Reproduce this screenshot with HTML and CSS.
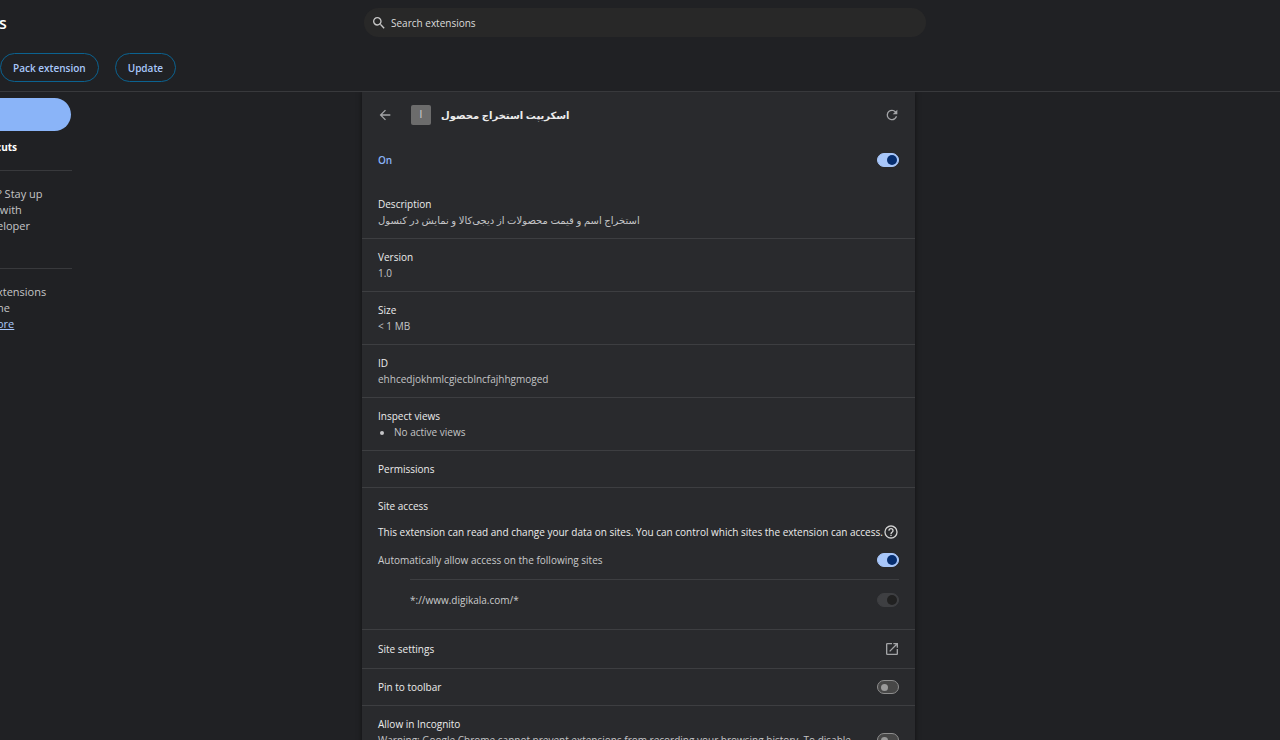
FILE: index.html
```html
<!DOCTYPE html>
<html lang="en">
<head>
    <meta charset="UTF-8">
    <meta name="viewport" content="width=device-width, initial-scale=1.0">
    <title>Extensions</title>
    <link rel="stylesheet" href="styles.css">
</head>
<body>
    <header>
        <div class="top-bar">
            <h1>s</h1>
            <label class="search">
                <svg width="16" height="16" viewBox="0 0 24 24" fill="currentColor"><path d="M15.5 14h-.79l-.28-.27A6.47 6.47 0 0 0 16 9.5 6.5 6.5 0 1 0 9.5 16c1.61 0 3.09-.59 4.23-1.57l.27.28v.79l5 4.99L20.49 19l-4.99-5zm-6 0C7.01 14 5 11.99 5 9.5S7.01 5 9.5 5 14 7.01 14 9.5 11.99 14 9.5 14z"/></svg>
                <input type="search" placeholder="Search extensions" aria-label="Search extensions">
            </label>
        </div>
        <div class="dev-buttons">
            <button>Pack extension</button>
            <button>Update</button>
        </div>
    </header>

    <div class="content">
        <nav class="sidebar">
            <a class="selected" href="#" aria-label="Extensions"></a>
            <a class="shortcuts" href="#">cuts</a>
            <p>? Stay up<br>&nbsp;with<br>eloper</p>
            <p>xtensions<br>he<br><a href="#">ore</a></p>
        </nav>

        <main class="card">
            <div class="card-header">
                <button class="icon-button" aria-label="Back">
                    <svg width="16" height="16" viewBox="0 0 24 24" fill="currentColor"><path d="M20 11H7.83l5.59-5.59L12 4l-8 8 8 8 1.41-1.41L7.83 13H20v-2z"/></svg>
                </button>
                <span class="ext-icon">ا</span>
                <h2 dir="rtl" lang="fa">اسکریپت استخراج محصول</h2>
                <button class="icon-button" aria-label="Reload">
                    <svg width="16" height="16" viewBox="0 0 24 24" fill="currentColor"><path d="M17.65 6.35A7.96 7.96 0 0 0 12 4a8 8 0 1 0 7.73 10h-2.08A6 6 0 1 1 12 6c1.66 0 3.14.69 4.22 1.78L13 11h7V4l-2.35 2.35z"/></svg>
                </button>
            </div>
            <div class="on-row">
                <label for="enable">On</label>
                <input class="toggle" type="checkbox" id="enable" checked>
            </div>

            <section>
                <h3>Description</h3>
                <p><bdi lang="fa">استخراج اسم و قیمت محصولات از دیجی‌کالا و نمایش در کنسول</bdi></p>
            </section>
            <section>
                <h3>Version</h3>
                <p>1.0</p>
            </section>
            <section>
                <h3>Size</h3>
                <p>&lt; 1 MB</p>
            </section>
            <section>
                <h3>ID</h3>
                <p>ehhcedjokhmlcgiecblncfajhhgmoged</p>
            </section>
            <section>
                <h3>Inspect views</h3>
                <ul>
                    <li>No active views</li>
                </ul>
            </section>
            <section>
                <h3>Permissions</h3>
            </section>
            <section>
                <h3>Site access</h3>
                <div class="access-info">
                    <span>This extension can read and change your data on sites. You can control which sites the extension can access.</span>
                    <a href="#" aria-label="Help">
                        <svg width="16" height="16" viewBox="0 0 24 24" fill="currentColor"><path d="M11 18h2v-2h-2v2zm1-16a10 10 0 1 0 0 20 10 10 0 0 0 0-20zm0 18c-4.41 0-8-3.59-8-8s3.59-8 8-8 8 3.59 8 8-3.59 8-8 8zm0-14a4 4 0 0 0-4 4h2c0-1.1.9-2 2-2s2 .9 2 2c0 2-3 1.75-3 5h2c0-2.25 3-2.5 3-5a4 4 0 0 0-4-4z"/></svg>
                    </a>
                </div>
                <div class="access-row">
                    <label for="all-sites">Automatically allow access on the following sites</label>
                    <input class="toggle" type="checkbox" id="all-sites" checked>
                </div>
                <div class="site-row">
                    <label for="site">*://www.digikala.com/*</label>
                    <input class="toggle" type="checkbox" id="site" checked disabled>
                </div>
            </section>
            <section class="row settings">
                <h3>Site settings</h3>
                <button class="icon-button" aria-label="Site settings">
                    <svg width="16" height="16" viewBox="0 0 24 24" fill="currentColor"><path d="M19 19H5V5h7V3H5a2 2 0 0 0-2 2v14a2 2 0 0 0 2 2h14c1.1 0 2-.9 2-2v-7h-2v7zM14 3v2h3.59l-9.83 9.83 1.41 1.41L19 6.41V10h2V3h-7z"/></svg>
                </button>
            </section>
            <section class="row">
                <h3><label for="pin">Pin to toolbar</label></h3>
                <input class="toggle" type="checkbox" id="pin">
            </section>
            <section class="row incognito">
                <div>
                    <h3><label for="incognito">Allow in Incognito</label></h3>
                    <p>Warning: Google Chrome cannot prevent extensions from recording your browsing history. To disable</p>
                </div>
                <input class="toggle" type="checkbox" id="incognito">
            </section>
        </main>
    </div>
</body>
</html>
```
FILE: styles.css
```css
* {
    box-sizing: border-box;
}
body {
    margin: 0;
    height: 100vh;
    overflow: hidden;
    background-color: #202124;
    color: #ececec;
    font-family: "Open Sans", "DejaVu Sans", sans-serif;
    font-size: 10px;
    line-height: 16px;
}
h1, h2, h3, p, ul {
    margin: 0;
    font-size: 10px;
}
svg {
    display: block;
}
button, input {
    font: inherit;
    margin: 0;
}
header {
    height: 92px;
    border-bottom: 1px solid #38393c;
}
.top-bar {
    display: grid;
    grid-template-columns: 1fr 562px 1fr;
    align-items: center;
    padding: 8px 0 0 10px;
}
.top-bar h1 {
    margin-left: -11px;
    font-size: 16px;
    font-weight: 600;
    color: #fff;
}
.search {
    grid-column: 2;
    display: flex;
    align-items: center;
    gap: 4px;
    height: 29px;
    padding: 0 7px;
    border-radius: 15px;
    background-color: #282828;
    color: #c7c7c7;
}
.search input {
    flex: 1;
    padding: 0;
    border: none;
    outline: none;
    background: none;
    color: #e3e3e3;
}
.search input::placeholder {
    color: #dcdcdc;
}
.dev-buttons {
    display: flex;
    gap: 16px;
    margin-top: 16px;
}
.dev-buttons button {
    height: 29px;
    padding: 0 12px;
    border: 1px solid #0b6290;
    border-radius: 15px;
    background: none;
    color: #a8c7fa;
    font-weight: 600;
}
.content {
    display: grid;
    grid-template-columns: 1fr 553px 1fr;
    padding-right: 3px;
}
.sidebar {
    width: 72px;
    padding-top: 6px;
    color: #c4c5c7;
}
.selected {
    display: block;
    height: 33px;
    margin-right: 1px;
    border-radius: 0 17px 17px 0;
    background-color: #8ab4f8;
}
.shortcuts {
    display: block;
    padding: 8px 0 15px;
    margin-left: -4px;
    color: #fff;
    font-weight: 700;
    text-decoration: none;
}
.sidebar p {
    height: 98px;
    margin-left: -3px;
    padding-top: 15px;
    border-top: 1px solid #38393c;
    font-size: 11px;
    white-space: nowrap;
}
.sidebar p a {
    color: #a8c7fa;
}
.card {
    background-color: #292a2d;
    box-shadow: 0 0 5px rgba(0, 0, 0, 0.5);
    clip-path: inset(0 -8px);
}
.card-header {
    display: flex;
    align-items: center;
    height: 46px;
    padding: 0 15px;
}
.icon-button {
    padding: 0;
    border: none;
    background: none;
    color: #a3a4a7;
}
.ext-icon {
    width: 20px;
    height: 20px;
    margin: 0 10px 0 18px;
    border-radius: 2px;
    background-color: #6c6c6c;
    color: #d0d0d0;
    line-height: 18px;
    text-align: center;
}
.card-header h2 {
    margin-right: auto;
    font-weight: 700;
}
.on-row {
    display: flex;
    align-items: center;
    justify-content: space-between;
    height: 44px;
    margin-bottom: 4px;
    padding: 0 16px;
    color: #8ab4f8;
    font-weight: 600;
}
section {
    padding: 10px 16px;
    border-bottom: 1px solid #3d3e41;
}
h3 {
    font-weight: 500;
}
section p, section ul {
    color: #c4c5c7;
}
section ul {
    padding-left: 16px;
}
.toggle {
    appearance: none;
    display: flex;
    flex-shrink: 0;
    align-items: center;
    width: 22px;
    height: 14px;
    padding: 0 3px;
    border: 1px solid #8e8e8e;
    border-radius: 7px;
    background-color: #474747;
}
.toggle::before {
    content: "";
    width: 7px;
    height: 7px;
    border-radius: 50%;
    background-color: #9a9a9a;
}
.toggle:checked {
    justify-content: flex-end;
    padding: 0 1px;
    border-color: #a8c7fa;
    background-color: #a8c7fa;
}
.toggle:checked::before {
    width: 10px;
    height: 10px;
    background-color: #062e6f;
}
.toggle:disabled {
    border-color: #3e3f42;
    background-color: #3e3f42;
}
.toggle:disabled::before {
    background-color: #212121;
}
.access-info {
    display: flex;
    align-items: center;
    margin-top: 10px;
    white-space: nowrap;
}
.access-info a {
    color: #d5d5d5;
}
.access-row, .site-row {
    display: flex;
    align-items: center;
    justify-content: space-between;
    color: #c9cacc;
}
.access-row {
    height: 38px;
    margin-top: 1px;
}
.site-row {
    height: 40px;
    margin-left: 32px;
    border-top: 1px solid #3d3e41;
}
.row {
    display: flex;
    align-items: center;
    justify-content: space-between;
}
.settings {
    padding: 11px 15px 11px 16px;
}
.incognito div {
    min-height: 48px;
}
```
